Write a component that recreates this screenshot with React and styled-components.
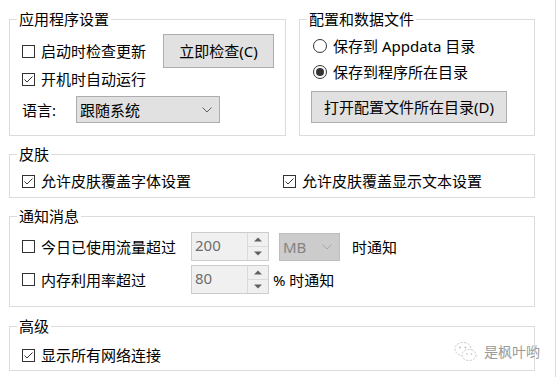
import React from 'react'
import styled, { createGlobalStyle } from 'styled-components'

const GlobalStyle = createGlobalStyle`
  html, body {
    margin: 0;
    padding: 0;
    background: #fff;
  }
  body {
    font-family: "Noto Sans", "Noto Sans CJK SC", sans-serif;
    font-size: 15px;
    color: #000;
  }
`

const Page = styled.div`
  width: 556px;
  height: 377px;
  box-sizing: border-box;
  border-right: 1px solid #dadada;
  padding: 8px 0 0 9px;
  display: flex;
  flex-direction: column;
  gap: 7px;
`

const TopRow = styled.div`
  display: flex;
  gap: 13px;
`

const Group = styled.fieldset`
  margin: 0;
  padding: 0;
  min-width: 0;
  box-sizing: border-box;
  width: ${({ $w }) => $w}px;
  border: 1px solid #dcdcdc;
  position: relative;
`

const Legend = styled.legend`
  margin-left: 7px;
  padding: 0 2px;
  line-height: 22px;
  height: 22px;
`

const Body = styled.div`
  padding: ${({ $pad }) => $pad};
  display: flex;
  flex-direction: column;
`

const Row = styled.div`
  display: flex;
  align-items: center;
  height: ${({ $h }) => $h || 20}px;
  margin-top: ${({ $mt }) => $mt || 0}px;
`

const CheckItem = styled.label`
  display: flex;
  align-items: center;
  gap: 6px;
  line-height: 20px;
  width: ${({ $w }) => ($w ? `${$w}px` : 'auto')};
  flex-shrink: 0;
`

const Box = styled.span`
  width: 13px;
  height: 13px;
  box-sizing: border-box;
  border: 1px solid #333;
  background: #fff;
  display: flex;
  align-items: center;
  justify-content: center;
`

const RadioCircle = styled.span`
  width: 14px;
  height: 14px;
  box-sizing: border-box;
  border: 1px solid #333;
  border-radius: 50%;
  display: flex;
  align-items: center;
  justify-content: center;
  &::after {
    content: '';
    width: 8px;
    height: 8px;
    border-radius: 50%;
    background: ${({ $on }) => ($on ? '#333' : 'transparent')};
  }
`

const Button = styled.div`
  box-sizing: border-box;
  width: ${({ $w }) => $w}px;
  height: ${({ $h }) => $h}px;
  margin-left: ${({ $ml }) => $ml || 0}px;
  background: #e1e1e1;
  border: 1px solid #adadad;
  display: flex;
  align-items: center;
  justify-content: center;
  line-height: 20px;
`

const Combo = styled.div`
  box-sizing: border-box;
  width: ${({ $w }) => $w}px;
  height: ${({ $h }) => $h}px;
  background: ${({ $disabled }) => ($disabled ? '#cccccc' : '#e1e1e1')};
  border: 1px solid ${({ $disabled }) => ($disabled ? '#bfbfbf' : '#adadad')};
  color: ${({ $disabled }) => ($disabled ? '#838383' : '#000')};
  display: flex;
  align-items: center;
  justify-content: space-between;
  padding: 0 7px 0 3px;
  line-height: 20px;
`

const Label = styled.span`
  line-height: 20px;
  width: ${({ $w }) => ($w ? `${$w}px` : 'auto')};
  margin-left: ${({ $ml }) => $ml || 0}px;
  flex-shrink: 0;
`

const Spin = styled.div`
  box-sizing: border-box;
  width: 78px;
  height: 29px;
  border: 1px solid #cccccc;
  background: #f0f0f0;
  display: flex;
`

const SpinValue = styled.div`
  flex: 1;
  padding: 2px 0 0 3px;
  color: #6d6d6d;
  line-height: 20px;
`

const SpinButtons = styled.div`
  width: 20px;
  display: flex;
  flex-direction: column;
  border-left: 1px solid #dadada;
`

const SpinBtn = styled.div`
  flex: 1;
  display: flex;
  align-items: center;
  justify-content: center;
  & + & {
    border-top: 1px solid #dadada;
  }
`

const Watermark = styled.div`
  position: absolute;
  right: -6px;
  top: 4px;
  display: flex;
  align-items: center;
  gap: 6px;
  color: #9a9a9a;
  font-size: 14px;
  line-height: 20px;
`

const Check = ({ on }) => (
  <Box>
    {on && (
      <svg width="11" height="11" viewBox="0 0 11 11">
        <path d="M1.5 5.5 L4 8 L9.5 2.5" fill="none" stroke="#333" strokeWidth="1" />
      </svg>
    )}
  </Box>
)

const Chevron = ({ color }) => (
  <svg width="10" height="6" viewBox="0 0 10 6">
    <path d="M0.5 0.5 L5 5 L9.5 0.5" fill="none" stroke={color} strokeWidth="1" />
  </svg>
)

const Arrow = ({ up }) => (
  <svg width="8" height="5" viewBox="0 0 8 5">
    <path d={up ? 'M0 4.5 L4 0.5 L8 4.5 Z' : 'M0 0.5 L4 4.5 L8 0.5 Z'} fill="#606060" />
  </svg>
)

const SpinBox = ({ value }) => (
  <Spin>
    <SpinValue>{value}</SpinValue>
    <SpinButtons>
      <SpinBtn><Arrow up /></SpinBtn>
      <SpinBtn><Arrow /></SpinBtn>
    </SpinButtons>
  </Spin>
)

const WeChatMark = () => (
  <svg width="24" height="22" viewBox="0 0 24 22">
    <ellipse cx="9" cy="8" rx="8" ry="6.5" fill="none" stroke="#c4c4c4" strokeWidth="1" strokeDasharray="2 1.5" />
    <ellipse cx="15" cy="14" rx="7" ry="5.5" fill="#fff" stroke="#c4c4c4" strokeWidth="1" strokeDasharray="2 1.5" />
    <circle cx="6" cy="6.5" r="0.9" fill="#bbb" />
    <circle cx="11.5" cy="6.5" r="0.9" fill="#bbb" />
    <circle cx="13" cy="13" r="0.8" fill="#bbb" />
    <circle cx="17.5" cy="13" r="0.8" fill="#bbb" />
  </svg>
)

export default function App() {
  return (
    <>
      <GlobalStyle />
      <Page>
        <TopRow>
          <Group $w={277}>
            <Legend>应用程序设置</Legend>
            <Body $pad="4px 0 12px 12px">
              <Row $h={34}>
                <CheckItem $w={141}><Check />启动时检查更新</CheckItem>
                <Button $w={111} $h={34}>立即检查(C)</Button>
              </Row>
              <Row $mt={1}>
                <CheckItem><Check on />开机时自动运行</CheckItem>
              </Row>
              <Row $h={27} $mt={7}>
                <Label $w={54}>语言:</Label>
                <Combo $w={144} $h={27}>
                  跟随系统
                  <Chevron color="#606060" />
                </Combo>
              </Row>
            </Body>
          </Group>
          <Group $w={236}>
            <Legend>配置和数据文件</Legend>
            <Body $pad="5px 0 11px 13px">
              <Row $h={22}>
                <CheckItem><RadioCircle />保存到 Appdata 目录</CheckItem>
              </Row>
              <Row $h={22} $mt={4}>
                <CheckItem><RadioCircle $on />保存到程序所在目录</CheckItem>
              </Row>
              <Row $h={32} $mt={8}>
                <Button $w={196} $h={32} $ml={-2}>打开配置文件所在目录(D)</Button>
              </Row>
            </Body>
          </Group>
        </TopRow>

        <Group $w={526}>
          <Legend>皮肤</Legend>
          <Body $pad="6px 0 6px 12px">
            <Row>
              <CheckItem $w={261}><Check on />允许皮肤覆盖字体设置</CheckItem>
              <CheckItem><Check on />允许皮肤覆盖显示文本设置</CheckItem>
            </Row>
          </Body>
        </Group>

        <Group $w={526}>
          <Legend>通知消息</Legend>
          <Body $pad="5px 0 12px 12px">
            <Row $h={29}>
              <CheckItem $w={169}><Check />今日已使用流量超过</CheckItem>
              <SpinBox value="200" />
              <Combo $w={61} $h={28} $disabled style={{ marginLeft: 10 }}>
                MB
                <Chevron color="#a8a8a8" />
              </Combo>
              <Label $ml={12}>时通知</Label>
            </Row>
            <Row $h={29} $mt={4}>
              <CheckItem $w={169}><Check />内存利用率超过</CheckItem>
              <SpinBox value="80" />
              <Label $ml={4}>% 时通知</Label>
            </Row>
          </Body>
        </Group>

        <Group $w={526} style={{ marginTop: 1 }}>
          <Legend>高级</Legend>
          <Body $pad="8px 0 5px 12px">
            <Row>
              <CheckItem><Check on />显示所有网络连接</CheckItem>
            </Row>
          </Body>
          <Watermark>
            <WeChatMark />
            是枫叶哟
          </Watermark>
        </Group>
      </Page>
    </>
  )
}
